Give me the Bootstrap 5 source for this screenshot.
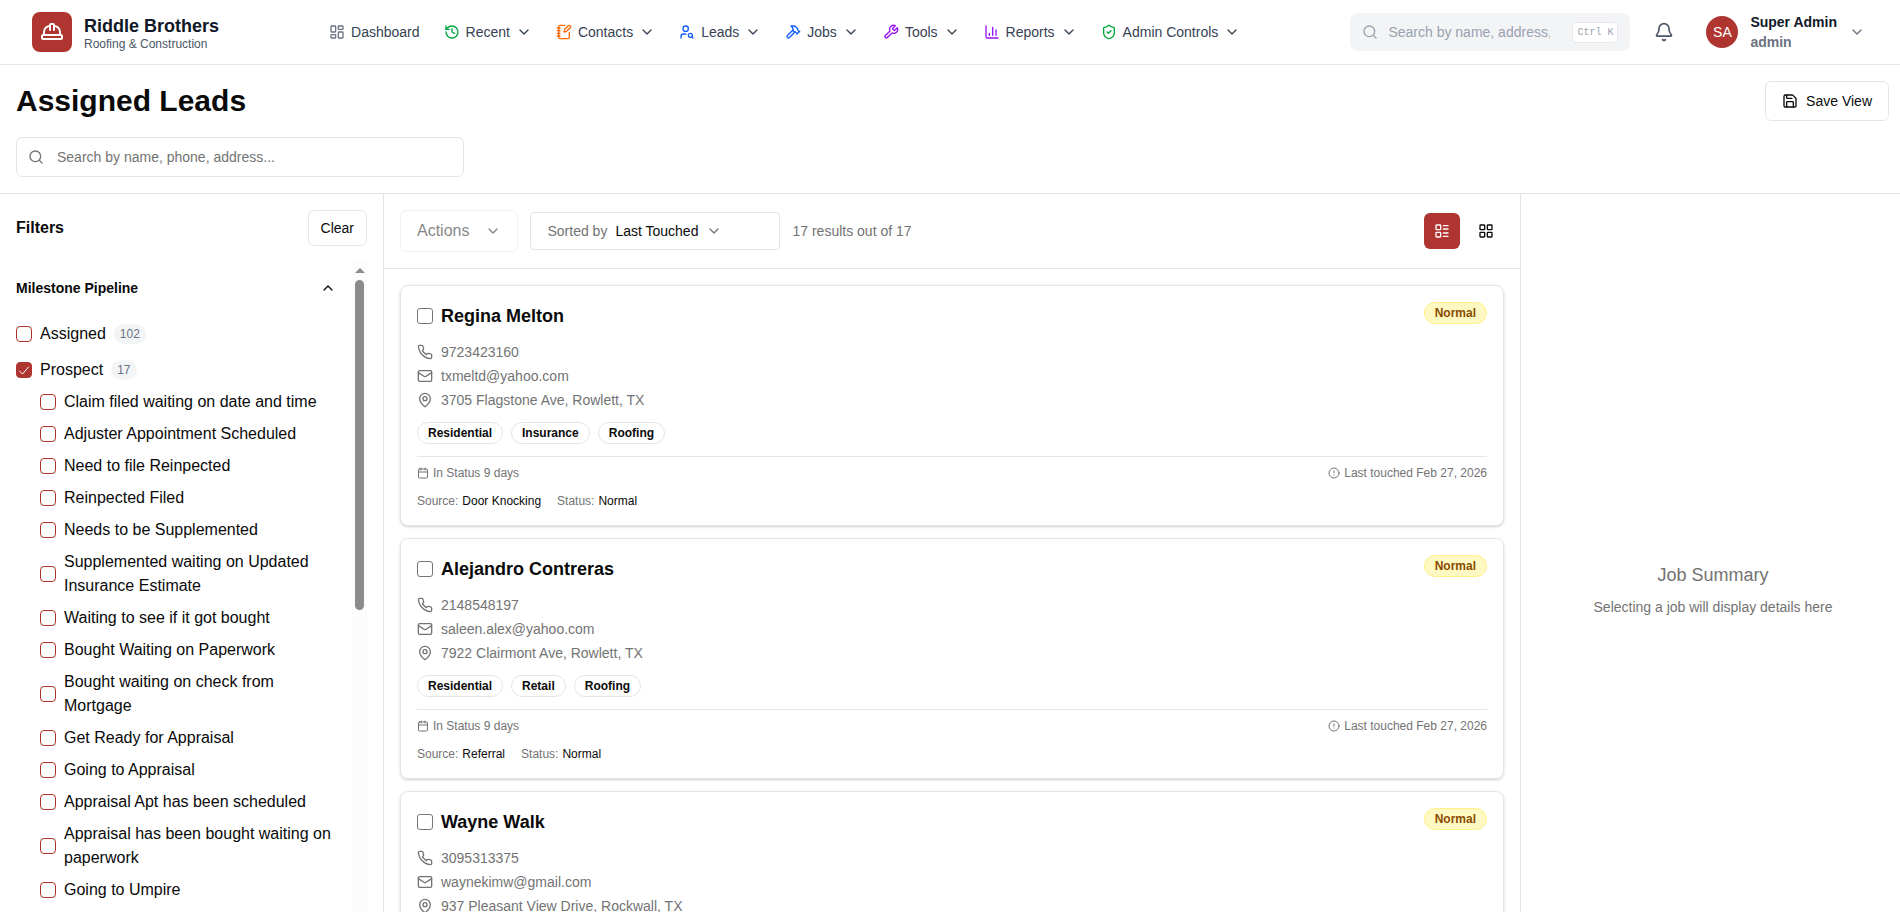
<!DOCTYPE html>
<html lang="en">
<head>
<meta charset="utf-8">
<meta name="viewport" content="width=device-width, initial-scale=1">
<title>Assigned Leads</title>
<link href="https://cdn.jsdelivr.net/npm/bootstrap@5.3.0/dist/css/bootstrap.min.css" rel="stylesheet">
<script src="https://cdn.jsdelivr.net/npm/bootstrap@5.3.0/dist/js/bootstrap.bundle.min.js" defer></script>
<style>
:root{--brand:#af3530;--line:#e5e5e5;--muted:#737373}
body{font:14px/20px "Liberation Sans",Arial,sans-serif;color:#0a0a0a;background:#fff;--bs-border-color:var(--line)}
a{color:inherit;text-decoration:none}
.ico{width:16px;height:16px;fill:none;stroke:currentColor;stroke-width:2;stroke-linecap:round;stroke-linejoin:round;flex:none}
.ico-20{width:20px;height:20px}
.ico-24{width:24px;height:24px}
.ico-12{width:12px;height:12px}
.gap-6{gap:6px}
.gap-12{gap:12px}
.shell{height:100vh}
.topbar{height:65px;border-color:#e5e7eb!important;padding:0 35px 0 32px}
.logo-box{width:40px;height:40px;background:var(--brand);border-radius:8px;color:#fff}
.brand-name{font-size:18px;line-height:24px;font-weight:700;color:#101828}
.brand-sub{font-size:12px;line-height:12px;color:#4a5565}
.main-nav{margin-left:98px}
.menu-link{border:0;background:none;padding:8px 12px;color:#364153;white-space:nowrap}
.quick{width:280px;height:38px;gap:10px;background:#f3f4f6;border-radius:8px;padding:0 12px;color:#99a1af}
.quick input{border:0;background:none;outline:0;width:162px;padding:0}
.quick input::placeholder{color:#99a1af}
.quick kbd{background:#fff;border:1px solid #e5e7eb;border-radius:4px;color:#99a1af;font:10px/15px "Liberation Mono",monospace;padding:2px 4px}
.bell{margin:0 32px 0 24px;color:#4a5565}
.profile{font-size:14px;line-height:20px;color:#6a7282}
.avatar-dot{width:32px;height:32px;background:var(--brand);color:#fff}
.profile-name{color:#101828}
h1{font-size:30px;line-height:36px}
.page-head{padding:16px 11px 16px 16px}
.box-btn{border:1px solid var(--line);border-radius:6px;background:#fff;color:#0a0a0a;white-space:nowrap}
.save-btn{height:40px}
.clear-btn{height:36px;padding:0 12px}
.lead-search{width:448px;height:40px;padding:0 12px 0 11px;gap:13px;border:1px solid var(--line);border-radius:6px;color:var(--muted)}
.lead-search input{border:0;outline:0;background:none;padding:0}
.lead-search input::placeholder{color:var(--muted)}
.filters{width:384px;padding:16px 16px 0}
.filters h2{font-size:16px;line-height:24px}
.fold{border:0;background:none;padding:0;font-weight:700;color:#0a0a0a}
.filter-list{font-size:16px;line-height:24px;color:#0a0a0a}
.form-check-input{flex:none;margin:0;width:16px;height:16px;border:1px solid var(--brand);border-radius:4px}
.form-check-input:checked,.form-check-input:checked[type=checkbox]{background-color:var(--brand);border-color:var(--brand);background-image:url("data:image/svg+xml,%3csvg xmlns='http://www.w3.org/2000/svg' viewBox='0 0 14 14'%3e%3cpath fill='none' stroke='%23fff' stroke-linecap='round' d='m2.500 8 3 3 6-7'/%3e%3c/svg%3e")}
.form-check-input.pick{border-color:#767676;border-radius:3px}
.count-pill{background:#f3f4f6;color:#6a7282;border-radius:10px;font-size:12px;line-height:16px;padding:2px 6px}
.track{width:15px;background:#fcfcfc;padding-top:6px}
.arrow-up{border:5px solid transparent;border-top:0;border-bottom-color:#8b8b8b}
.thumb{width:9px;height:330px;border-radius:5px;background:#8b8b8b;margin-top:7px}
.toolbar{height:75px;padding:0 16px}
.actions{height:42px;padding:0 16px;gap:16px;font-size:16px;opacity:.5}
.sorter{width:250px;height:38px;padding:0 16px;border-radius:4px}
.muted{color:var(--muted)}
.view-btn{width:36px;height:36px;border:0;border-radius:6px;background:none;color:#0a0a0a}
.view-btn.active{background:var(--brand);color:#fff}
.lead-card{border:1px solid var(--line);border-radius:8px;padding:16px;box-shadow:0 1px 3px rgba(0,0,0,.1),0 1px 2px rgba(0,0,0,.1)}
.lead-card h2{font-size:18px;line-height:28px}
.chip{border:1px solid var(--line);border-radius:11px;font-size:12px;line-height:16px;font-weight:700;padding:2px 10px}
.chip-warn{background:#fef9c2;border-color:#fff085;color:#894b00}
.meta{font-size:12px;line-height:16px}
.summary{width:380px;padding:72px 0 0 5px}
.summary h2{font-size:18px;line-height:28px}
</style>
</head>
<body>
<svg class="d-none">
<symbol id="chev" viewBox="0 0 24 24"><path d="m6 9 6 6 6-6"/></symbol>
<symbol id="search" viewBox="0 0 24 24"><circle cx="11" cy="11" r="8"/><path d="m21 21-4.3-4.3"/></symbol>
<symbol id="phone" viewBox="0 0 24 24"><path d="M22 16.92v3a2 2 0 0 1-2.18 2 19.79 19.79 0 0 1-8.63-3.07 19.5 19.5 0 0 1-6-6 19.79 19.79 0 0 1-3.07-8.67A2 2 0 0 1 4.11 2h3a2 2 0 0 1 2 1.72 12.84 12.84 0 0 0 .7 2.81 2 2 0 0 1-.45 2.11L8.09 9.91a16 16 0 0 0 6 6l1.27-1.27a2 2 0 0 1 2.11-.45 12.84 12.84 0 0 0 2.81.7A2 2 0 0 1 22 16.92z"/></symbol>
<symbol id="mail" viewBox="0 0 24 24"><rect width="20" height="16" x="2" y="4" rx="2"/><path d="m22 7-8.97 5.7a1.94 1.94 0 0 1-2.06 0L2 7"/></symbol>
<symbol id="pin" viewBox="0 0 24 24"><path d="M20 10c0 4.993-5.539 10.193-7.399 11.799a1 1 0 0 1-1.202 0C9.539 20.193 4 14.993 4 10a8 8 0 0 1 16 0"/><circle cx="12" cy="10" r="3"/></symbol>
<symbol id="cal" viewBox="0 0 24 24"><path d="M8 2v4M16 2v4M3 10h18"/><rect width="18" height="18" x="3" y="4" rx="2"/></symbol>
<symbol id="alert" viewBox="0 0 24 24"><circle cx="12" cy="12" r="10"/><path d="M12 8v4M12 16h.01"/></symbol>
</svg>
<div class="shell d-flex flex-column overflow-hidden">
<header class="topbar d-flex align-items-center border-bottom flex-shrink-0">
  <a href="#" class="d-flex align-items-center gap-12">
    <span class="logo-box d-flex align-items-center justify-content-center"><svg class="ico ico-24" viewBox="0 0 24 24"><path d="M10 10V5a1 1 0 0 1 1-1h2a1 1 0 0 1 1 1v5"/><path d="M14 6a6 6 0 0 1 6 6v3"/><path d="M4 15v-3a6 6 0 0 1 6-6"/><rect x="2" y="15" width="20" height="4" rx="1"/></svg></span>
    <span class="d-flex flex-column"><span class="brand-name">Riddle Brothers</span><span class="brand-sub">Roofing &amp; Construction</span></span>
  </a>
  <nav class="main-nav d-flex">
    <a href="#" class="menu-link d-flex align-items-center gap-6"><svg class="ico" style="color:#6a7282" viewBox="0 0 24 24"><rect width="7" height="9" x="3" y="3" rx="1"/><rect width="7" height="5" x="14" y="3" rx="1"/><rect width="7" height="9" x="14" y="12" rx="1"/><rect width="7" height="5" x="3" y="16" rx="1"/></svg>Dashboard</a>
    <button type="button" class="menu-link d-flex align-items-center gap-6"><svg class="ico" style="color:#00a63e" viewBox="0 0 24 24"><path d="M3 12a9 9 0 1 0 9-9 9.75 9.75 0 0 0-6.74 2.74L3 8"/><path d="M3 3v5h5M12 7v5l4 2"/></svg>Recent<svg class="ico"><use href="#chev"/></svg></button>
    <button type="button" class="menu-link d-flex align-items-center gap-6"><svg class="ico" style="color:#ff6900" viewBox="0 0 24 24"><path d="M13.4 2H6a2 2 0 0 0-2 2v16a2 2 0 0 0 2 2h12a2 2 0 0 0 2-2v-7.4"/><path d="M2 6h4M2 10h4M2 14h4M2 18h4"/><path d="M21.378 5.626a1 1 0 1 0-3.004-3.004l-5.01 5.012a2 2 0 0 0-.506.854l-.837 2.87a.5.5 0 0 0 .62.62l2.87-.837a2 2 0 0 0 .854-.506z"/></svg>Contacts<svg class="ico"><use href="#chev"/></svg></button>
    <button type="button" class="menu-link d-flex align-items-center gap-6"><svg class="ico" style="color:#155dfc" viewBox="0 0 24 24"><circle cx="10" cy="7" r="4"/><path d="M10.3 15H7a4 4 0 0 0-4 4v2"/><circle cx="17" cy="17" r="3"/><path d="m21 21-1.9-1.9"/></svg>Leads<svg class="ico"><use href="#chev"/></svg></button>
    <button type="button" class="menu-link d-flex align-items-center gap-6"><svg class="ico" style="color:#155dfc" viewBox="0 0 24 24"><path d="m15 12-8.373 8.373a1 1 0 1 1-3-3L12 9"/><path d="m18 15 4-4"/><path d="m21.5 11.5-1.914-1.914A2 2 0 0 1 19 8.172V7l-2.26-2.26a6 6 0 0 0-4.202-1.756L9 2.96l.92.82A6.18 6.18 0 0 1 12 8.4V10l2 2h1.172a2 2 0 0 1 1.414.586L18.5 14.5"/></svg>Jobs<svg class="ico"><use href="#chev"/></svg></button>
    <button type="button" class="menu-link d-flex align-items-center gap-6"><svg class="ico" style="color:#9810fa" viewBox="0 0 24 24"><path d="M14.7 6.3a1 1 0 0 0 0 1.4l1.6 1.6a1 1 0 0 0 1.4 0l3.77-3.77a6 6 0 0 1-7.94 7.94l-6.91 6.91a2.12 2.12 0 0 1-3-3l6.91-6.91a6 6 0 0 1 7.94-7.94l-3.76 3.76z"/></svg>Tools<svg class="ico"><use href="#chev"/></svg></button>
    <button type="button" class="menu-link d-flex align-items-center gap-6"><svg class="ico" style="color:#9810fa" viewBox="0 0 24 24"><path d="M3 3v16a2 2 0 0 0 2 2h16M18 17V9M13 17V5M8 17v-3"/></svg>Reports<svg class="ico"><use href="#chev"/></svg></button>
    <button type="button" class="menu-link d-flex align-items-center gap-6"><svg class="ico" style="color:#00a63e" viewBox="0 0 24 24"><path d="M20 13c0 5-3.5 7.5-7.66 8.95a1 1 0 0 1-.67-.01C7.5 20.5 4 18 4 13V6a1 1 0 0 1 1-1c2 0 4.5-1.2 6.24-2.72a1.17 1.17 0 0 1 1.52 0C14.51 3.81 17 5 19 5a1 1 0 0 1 1 1z"/><path d="m9 12 2 2 4-4"/></svg>Admin Controls<svg class="ico"><use href="#chev"/></svg></button>
  </nav>
  <div class="d-flex align-items-center ms-auto">
    <label class="quick d-flex align-items-center"><svg class="ico"><use href="#search"/></svg><input type="text" placeholder="Search by name, address, phone" aria-label="Search everything"><kbd class="ms-auto">Ctrl K</kbd></label>
    <button type="button" class="btn border-0 p-0 bell" aria-label="Notifications"><svg class="ico ico-20 d-block" viewBox="0 0 24 24"><path d="M10.268 21a2 2 0 0 0 3.464 0"/><path d="M3.262 15.326A1 1 0 0 0 4 17h16a1 1 0 0 0 .74-1.673C19.41 13.956 18 12.499 18 8A6 6 0 0 0 6 8c0 4.499-1.411 5.956-2.738 7.326"/></svg></button>
    <button type="button" class="btn border-0 p-0 d-flex align-items-center gap-12 text-start profile"><span class="avatar-dot rounded-circle d-flex align-items-center justify-content-center">SA</span><span class="d-flex flex-column"><b class="profile-name">Super Admin</b><b>admin</b></span><svg class="ico"><use href="#chev"/></svg></button>
  </div>
</header>
<section class="page-head border-bottom flex-shrink-0">
  <div class="d-flex justify-content-between align-items-center">
    <h1 class="fw-bold m-0">Assigned Leads</h1>
    <button type="button" class="box-btn save-btn d-flex align-items-center gap-2 px-3"><svg class="ico" viewBox="0 0 24 24"><path d="M15.2 3a2 2 0 0 1 1.4.6l3.8 3.8a2 2 0 0 1 .6 1.4V19a2 2 0 0 1-2 2H5a2 2 0 0 1-2-2V5a2 2 0 0 1 2-2z"/><path d="M17 21v-7a1 1 0 0 0-1-1H8a1 1 0 0 0-1 1v7M7 3v4a1 1 0 0 0 1 1h7"/></svg>Save View</button>
  </div>
  <label class="lead-search d-flex align-items-center mt-3"><svg class="ico"><use href="#search"/></svg><input type="text" class="flex-grow-1" placeholder="Search by name, phone, address..." aria-label="Search leads"></label>
</section>
<div class="d-flex flex-grow-1 overflow-hidden">
  <aside class="filters border-end d-flex flex-column flex-shrink-0 gap-3">
    <div class="d-flex justify-content-between align-items-center">
      <h2 class="fw-bold m-0">Filters</h2>
      <button type="button" class="box-btn clear-btn">Clear</button>
    </div>
    <div class="d-flex flex-grow-1 overflow-hidden">
      <div class="flex-grow-1 pt-3 pe-3">
        <button type="button" class="fold w-100 d-flex justify-content-between align-items-center mb-4">Milestone Pipeline<svg class="ico" viewBox="0 0 24 24"><path d="m18 15-6-6-6 6"/></svg></button>
        <div class="filter-list d-flex flex-column gap-2">
          <label class="d-flex align-items-center gap-2 mb-1"><input type="checkbox" class="form-check-input">Assigned<span class="count-pill">102</span></label>
          <label class="d-flex align-items-center gap-2"><input type="checkbox" class="form-check-input" checked>Prospect<span class="count-pill">17</span></label>
          <label class="d-flex align-items-center gap-2 ms-4"><input type="checkbox" class="form-check-input">Claim filed waiting on date and time</label>
          <label class="d-flex align-items-center gap-2 ms-4"><input type="checkbox" class="form-check-input">Adjuster Appointment Scheduled</label>
          <label class="d-flex align-items-center gap-2 ms-4"><input type="checkbox" class="form-check-input">Need to file Reinpected</label>
          <label class="d-flex align-items-center gap-2 ms-4"><input type="checkbox" class="form-check-input">Reinpected Filed</label>
          <label class="d-flex align-items-center gap-2 ms-4"><input type="checkbox" class="form-check-input">Needs to be Supplemented</label>
          <label class="d-flex align-items-center gap-2 ms-4"><input type="checkbox" class="form-check-input">Supplemented waiting on Updated Insurance Estimate</label>
          <label class="d-flex align-items-center gap-2 ms-4"><input type="checkbox" class="form-check-input">Waiting to see if it got bought</label>
          <label class="d-flex align-items-center gap-2 ms-4"><input type="checkbox" class="form-check-input">Bought Waiting on Paperwork</label>
          <label class="d-flex align-items-center gap-2 ms-4"><input type="checkbox" class="form-check-input">Bought waiting on check from Mortgage</label>
          <label class="d-flex align-items-center gap-2 ms-4"><input type="checkbox" class="form-check-input">Get Ready for Appraisal</label>
          <label class="d-flex align-items-center gap-2 ms-4"><input type="checkbox" class="form-check-input">Going to Appraisal</label>
          <label class="d-flex align-items-center gap-2 ms-4"><input type="checkbox" class="form-check-input">Appraisal Apt has been scheduled</label>
          <label class="d-flex align-items-center gap-2 ms-4"><input type="checkbox" class="form-check-input">Appraisal has been bought waiting on paperwork</label>
          <label class="d-flex align-items-center gap-2 ms-4"><input type="checkbox" class="form-check-input">Going to Umpire</label>
        </div>
      </div>
      <div class="track d-flex flex-column align-items-center flex-shrink-0"><span class="arrow-up"></span><span class="thumb"></span></div>
    </div>
  </aside>
  <main class="flex-grow-1 d-flex flex-column overflow-hidden">
    <div class="toolbar border-bottom d-flex align-items-center gap-12 flex-shrink-0">
      <button type="button" class="box-btn actions d-flex align-items-center" disabled>Actions<svg class="ico"><use href="#chev"/></svg></button>
      <button type="button" class="box-btn sorter d-flex align-items-center gap-2"><span class="muted">Sorted by</span>Last Touched<svg class="ico muted"><use href="#chev"/></svg></button>
      <span class="muted">17 results out of 17</span>
      <div class="d-flex gap-2 ms-auto">
        <button type="button" class="view-btn active d-flex align-items-center justify-content-center" aria-label="List view"><svg class="ico" viewBox="0 0 24 24"><rect width="7" height="7" x="3" y="3" rx="1"/><rect width="7" height="7" x="3" y="14" rx="1"/><path d="M14 4h7M14 9h7M14 15h7M14 20h7"/></svg></button>
        <button type="button" class="view-btn d-flex align-items-center justify-content-center" aria-label="Grid view"><svg class="ico" viewBox="0 0 24 24"><rect width="7" height="7" x="3" y="3" rx="1"/><rect width="7" height="7" x="14" y="3" rx="1"/><rect width="7" height="7" x="14" y="14" rx="1"/><rect width="7" height="7" x="3" y="14" rx="1"/></svg></button>
      </div>
    </div>
    <div class="d-flex flex-column gap-12 p-3 overflow-hidden">
      <article class="lead-card d-flex flex-column flex-shrink-0 gap-12">
        <div class="d-flex justify-content-between align-items-start">
          <label class="d-flex align-items-center gap-2"><input type="checkbox" class="form-check-input pick"><h2 class="fw-bold m-0">Regina Melton</h2></label>
          <span class="chip chip-warn">Normal</span>
        </div>
        <div class="d-flex flex-column gap-1 muted">
          <a href="#" class="d-flex align-items-center gap-2"><svg class="ico"><use href="#phone"/></svg>9723423160</a>
          <a href="#" class="d-flex align-items-center gap-2"><svg class="ico"><use href="#mail"/></svg>txmeltd@yahoo.com</a>
          <span class="d-flex align-items-center gap-2"><svg class="ico"><use href="#pin"/></svg>3705 Flagstone Ave, Rowlett, TX</span>
        </div>
        <div class="d-flex gap-2"><span class="chip">Residential</span><span class="chip">Insurance</span><span class="chip">Roofing</span></div>
        <div class="meta muted border-top pt-2 d-flex justify-content-between">
          <span class="d-flex align-items-center gap-1"><svg class="ico ico-12"><use href="#cal"/></svg>In Status 9 days</span>
          <span class="d-flex align-items-center gap-1"><svg class="ico ico-12"><use href="#alert"/></svg>Last touched Feb 27, 2026</span>
        </div>
        <div class="meta d-flex gap-3"><span class="d-flex gap-1"><span class="muted">Source:</span>Door Knocking</span><span class="d-flex gap-1"><span class="muted">Status:</span>Normal</span></div>
      </article>
      <article class="lead-card d-flex flex-column flex-shrink-0 gap-12">
        <div class="d-flex justify-content-between align-items-start">
          <label class="d-flex align-items-center gap-2"><input type="checkbox" class="form-check-input pick"><h2 class="fw-bold m-0">Alejandro Contreras</h2></label>
          <span class="chip chip-warn">Normal</span>
        </div>
        <div class="d-flex flex-column gap-1 muted">
          <a href="#" class="d-flex align-items-center gap-2"><svg class="ico"><use href="#phone"/></svg>2148548197</a>
          <a href="#" class="d-flex align-items-center gap-2"><svg class="ico"><use href="#mail"/></svg>saleen.alex@yahoo.com</a>
          <span class="d-flex align-items-center gap-2"><svg class="ico"><use href="#pin"/></svg>7922 Clairmont Ave, Rowlett, TX</span>
        </div>
        <div class="d-flex gap-2"><span class="chip">Residential</span><span class="chip">Retail</span><span class="chip">Roofing</span></div>
        <div class="meta muted border-top pt-2 d-flex justify-content-between">
          <span class="d-flex align-items-center gap-1"><svg class="ico ico-12"><use href="#cal"/></svg>In Status 9 days</span>
          <span class="d-flex align-items-center gap-1"><svg class="ico ico-12"><use href="#alert"/></svg>Last touched Feb 27, 2026</span>
        </div>
        <div class="meta d-flex gap-3"><span class="d-flex gap-1"><span class="muted">Source:</span>Referral</span><span class="d-flex gap-1"><span class="muted">Status:</span>Normal</span></div>
      </article>
      <article class="lead-card d-flex flex-column flex-shrink-0 gap-12">
        <div class="d-flex justify-content-between align-items-start">
          <label class="d-flex align-items-center gap-2"><input type="checkbox" class="form-check-input pick"><h2 class="fw-bold m-0">Wayne Walk</h2></label>
          <span class="chip chip-warn">Normal</span>
        </div>
        <div class="d-flex flex-column gap-1 muted">
          <a href="#" class="d-flex align-items-center gap-2"><svg class="ico"><use href="#phone"/></svg>3095313375</a>
          <a href="#" class="d-flex align-items-center gap-2"><svg class="ico"><use href="#mail"/></svg>waynekimw@gmail.com</a>
          <span class="d-flex align-items-center gap-2"><svg class="ico"><use href="#pin"/></svg>937 Pleasant View Drive, Rockwall, TX</span>
        </div>
      </article>
    </div>
  </main>
  <aside class="summary border-start flex-shrink-0 d-flex flex-column align-items-center justify-content-center gap-2 muted">
    <h2 class="fw-normal m-0">Job Summary</h2>
    <p class="m-0">Selecting a job will display details here</p>
  </aside>
</div>
</div>
</body>
</html>
